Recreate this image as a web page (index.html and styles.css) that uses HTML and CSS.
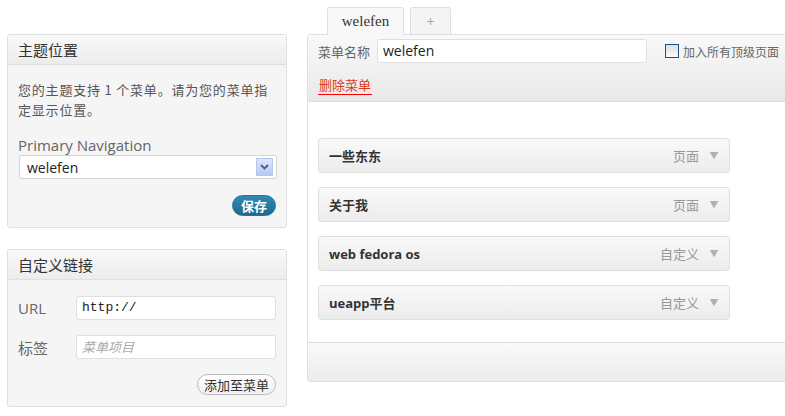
FILE: index.html
```html
<html>

<head>
    <meta charset="utf-8">
    <title>菜单</title>

    <link rel="stylesheet" href="styles.css">

</head>

<body>

    <div id="page">

        <div id="sidebar">

            <div class="panel">
                <div class="panel-head">主题位置</div>
                <div class="panel-body">
                    <p class="info">您的主题支持 1 个菜单。请为您的菜单指定显示位置。</p>
                    <div class="nav-label">Primary Navigation</div>
                    <div class="select">
                        <span>welefen</span>
                        <span class="select-arrow">
                            <svg width="9" height="6" viewBox="0 0 9 6"><path d="M1 1 L4.5 4.5 L8 1" fill="none" stroke="#3f5f96" stroke-width="1.8"/></svg>
                        </span>
                    </div>
                    <div class="actions">
                        <button class="btn-primary">保存</button>
                    </div>
                </div>
            </div>

            <div class="panel">
                <div class="panel-head">自定义链接</div>
                <div class="panel-body">
                    <div class="field">
                        <label>URL</label>
                        <div class="input mono">http://</div>
                    </div>
                    <div class="field">
                        <label>标签</label>
                        <div class="input placeholder">菜单项目</div>
                    </div>
                    <div class="actions">
                        <button class="btn">添加至菜单</button>
                    </div>
                </div>
            </div>

        </div>

        <div id="editor">
            <div class="tabs">
                <div class="tab active">welefen</div>
                <div class="tab add">+</div>
            </div>

            <div class="menu-box">
                <div class="menu-head">
                    <div class="name-row">
                        <span class="name-label">菜单名称</span>
                        <div class="input name-input">welefen</div>
                        <span class="check"></span>
                        <span class="check-label">加入所有顶级页面</span>
                    </div>
                    <a class="delete" href="#">删除菜单</a>
                </div>

                <div class="menu-items">
                    <div class="item"><b>一些东东</b><span class="type">页面</span><span class="arrow">▼</span></div>
                    <div class="item"><b>关于我</b><span class="type">页面</span><span class="arrow">▼</span></div>
                    <div class="item"><b>web fedora os</b><span class="type">自定义</span><span class="arrow">▼</span></div>
                    <div class="item"><b>ueapp平台</b><span class="type">自定义</span><span class="arrow">▼</span></div>
                </div>

                <div class="menu-foot"></div>
            </div>
        </div>

    </div>

</body>

</html>
```

FILE: styles.css
```css
body {
    margin: 0;
    background: #fff;
    font-family: "Open Sans", "Noto Sans CJK SC", sans-serif;
    font-size: 13px;
    color: #333;
    overflow: hidden;
}

#page {
    display: flex;
    align-items: flex-start;
    gap: 20px;
    padding: 7px 0 0 7px;
}

#sidebar {
    width: 280px;
    flex-shrink: 0;
    margin-top: 27px;
    display: flex;
    flex-direction: column;
    gap: 21px;
}

.panel {
    background: #f5f5f5;
    border: 1px solid #dfdfdf;
    border-radius: 3px;
}

.panel-head {
    height: 29px;
    line-height: 29px;
    padding-left: 10px;
    font-size: 15px;
    color: #333;
    background-image: linear-gradient(#f9f9f9, #ececec);
    border-bottom: 1px solid #dfdfdf;
    font-family: "Noto Sans CJK SC", sans-serif;
}

.panel-body {
    padding: 11px 10px 11px 10px;
}

.info {
    margin: 4px 0 0;
    padding-right: 4px;
    line-height: 20px;
    color: #555;
    letter-spacing: 0.8px;
    font-family: "Noto Sans CJK SC", sans-serif;
}

.nav-label {
    margin-top: 15px;
    font-size: 15px;
    color: #666;
    line-height: 20px;
}

.select {
    height: 22px;
    margin-left: 1px;
    width: 249px;
    padding-left: 7px;
    background: #fff;
    border: 1px solid #d4d4d4;
    border-radius: 2px;
    display: flex;
    align-items: center;
    justify-content: space-between;
    font-size: 14px;
    color: #222;
}

.select-arrow {
    width: 15px;
    height: 16px;
    margin-right: 3px;
    background-image: linear-gradient(#dfe6fb, #b9c8f3);
    border: 1px solid #b8c6ee;
    display: flex;
    align-items: center;
    justify-content: center;
}

.actions {
    display: flex;
    justify-content: flex-end;
    margin-top: 16px;
}

.panel:last-child .actions {
    margin-top: 0;
}

.btn-primary {
    height: 21px;
    padding: 0 8px;
    border: 1px solid #21759b;
    border-radius: 11px;
    background-image: linear-gradient(#2e8ab5, #1e6a8d);
    color: #fff;
    font-weight: bold;
    font-size: 13px;
    font-family: "Noto Sans CJK SC", sans-serif;
    line-height: 19px;
}

.btn {
    height: 21px;
    padding: 0 6px;
    border: 1px solid #bbb;
    border-radius: 11px;
    background-image: linear-gradient(#fefefe, #f0f0f0);
    color: #333;
    font-size: 13px;
    font-family: "Noto Sans CJK SC", sans-serif;
    line-height: 19px;
}

.field {
    display: flex;
    align-items: center;
    margin: 5px 0 15px;
}

.field label {
    width: 58px;
    font-size: 15px;
    color: #666;
}

.input {
    flex: 1;
    height: 22px;
    line-height: 22px;
    background: #fff;
    border: 1px solid #dfdfdf;
    border-radius: 3px;
    padding-left: 5px;
    font-size: 14px;
    color: #222;
}

.mono {
    font-family: "Liberation Mono", monospace;
    font-size: 13px;
}

.placeholder {
    font-style: italic;
    color: #aaa;
    font-size: 13px;
    font-family: "Noto Sans CJK SC", sans-serif;
}

#editor {
    width: 520px;
    flex-shrink: 0;
}

.tabs {
    display: flex;
    gap: 6px;
    padding-left: 20px;
    height: 27px;
    align-items: flex-end;
}

.tab {
    height: 26px;
    line-height: 27px;
    border: 1px solid #dfdfdf;
    border-bottom: none;
    border-radius: 3px 3px 0 0;
    background: #f4f4f4;
    font-family: "Liberation Serif", serif;
    font-size: 15px;
    color: #333;
    text-align: center;
}

.tab.active {
    width: 75px;
    height: 27px;
    position: relative;
    top: 1px;
    background: #f8f8f8;
}

.tab.add {
    width: 39px;
    color: #aaa;
    font-family: "Open Sans", sans-serif;
}

.menu-box {
    border: 1px solid #dfdfdf;
    border-radius: 3px 0 0 3px;
    background: #fff;
}

.menu-head {
    height: 66px;
    padding: 0 10px;
    background-image: linear-gradient(#f9f9f9, #e9e9e9);
    border-bottom: 1px solid #dfdfdf;
}

.name-row {
    display: flex;
    align-items: center;
    height: 32px;
    white-space: nowrap;
}

.name-label {
    width: 59px;
    color: #666;
    font-family: "Noto Sans CJK SC", sans-serif;
}

.name-input {
    flex: none;
    width: 263px;
}

.check {
    width: 12px;
    height: 12px;
    margin-left: 18px;
    border: 1px solid #1d4f8c;
    background-image: linear-gradient(#dedede, #fcfcfc);
}

.check-label {
    margin-left: 4px;
    font-size: 12px;
    color: #666;
    font-family: "Noto Sans CJK SC", sans-serif;
}

.delete {
    display: inline-block;
    margin-top: 9px;
    padding: 0 1px;
    color: #dd3a1c;
    text-decoration: none;
    border-bottom: 1px solid #f00;
    line-height: 18px;
    font-family: "Noto Sans CJK SC", sans-serif;
}

.menu-items {
    padding: 36px 0 22px 10px;
    display: flex;
    flex-direction: column;
    gap: 14px;
}

.item {
    width: 400px;
    height: 33px;
    display: flex;
    align-items: center;
    padding-left: 10px;
    border: 1px solid #dfdfdf;
    border-radius: 3px;
    background-image: linear-gradient(#f9f9f9, #ececec);
}

.item b {
    flex: 1;
    font-size: 13px;
    color: #333;
}

.type {
    color: #999;
    font-family: "Noto Sans CJK SC", sans-serif;
}

.arrow {
    width: 30px;
    text-align: center;
    font-size: 9px;
    color: #b0b0b0;
}

.menu-foot {
    height: 38px;
    border-top: 1px solid #dfdfdf;
    background-image: linear-gradient(#f9f9f9, #ececec);
}
```
